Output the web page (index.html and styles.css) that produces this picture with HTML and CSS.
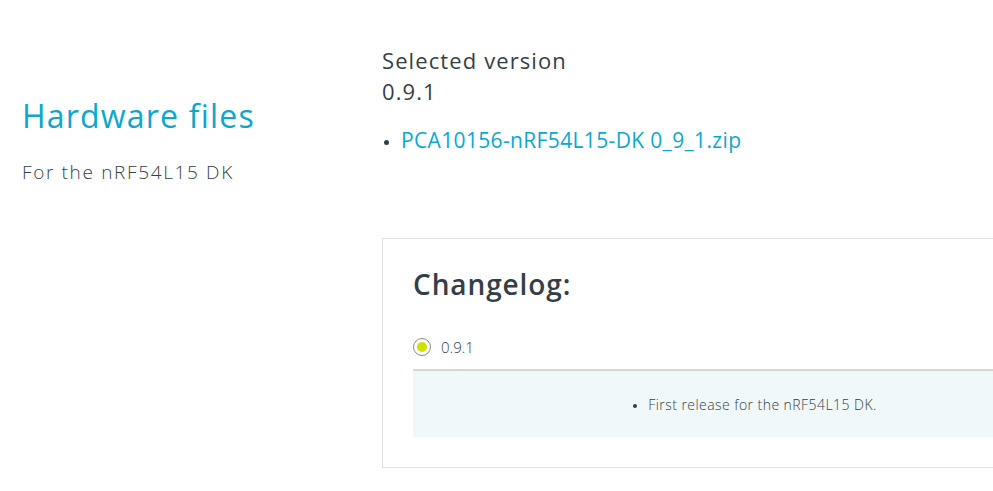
FILE: index.html
```html
<!DOCTYPE html>
<html lang="en">
<head>
<meta charset="utf-8">
<title>Hardware files</title>
<link rel="stylesheet" href="styles.css">
</head>
<body>
<div class="page">
  <div class="intro">
    <h1 class="title">Hardware files</h1>
    <p class="subtitle">For the nRF54L15 DK</p>
  </div>
  <div class="main">
    <div class="version">
      <div class="version-label">Selected version</div>
      <div class="version-number">0.9.1</div>
    </div>
    <ul class="files">
      <li><a class="file-link" href="#">PCA10156-nRF54L15-DK 0_9_1.zip</a></li>
    </ul>
    <section class="card">
      <h2 class="card-title">Changelog:</h2>
      <label class="release">
        <span class="radio"><span class="radio-dot"></span></span>
        <span class="release-name">0.9.1</span>
      </label>
      <div class="notes">
        <ul class="notes-list">
          <li>First release for the nRF54L15 DK.</li>
        </ul>
      </div>
    </section>
  </div>
</div>
</body>
</html>
```
FILE: styles.css
```css
html, body {
  margin: 0;
  padding: 0;
  overflow: hidden;
  background: #ffffff;
}
body {
  font-family: "Open Sans", "Noto Sans", sans-serif;
  color: #333f48;
}
.page {
  display: flex;
  padding: 44px 0 0 22px;
}
.intro {
  width: 360px;
  flex: none;
  padding-top: 52px;
}
.title {
  margin: 0;
  font-size: 32px;
  line-height: 40px;
  font-weight: 400;
  color: #0aa8cf;
  letter-spacing: 1.2px;
}
.subtitle {
  margin: 24px 0 0;
  font-size: 19px;
  line-height: 24px;
  font-weight: 300;
  color: #333f48;
  letter-spacing: 1.65px;
}
.main {
  flex: none;
  width: 760px;
}
.version-label,
.version-number {
  font-size: 22px;
  line-height: 30px;
  font-weight: 400;
  letter-spacing: 1.1px;
}
.version-label {
  margin-top: 1px;
}
.version-number {
  margin-top: 1px;
}
.files {
  margin: 20px 0 0;
  padding: 0 0 0 19px;
  font-size: 21px;
  line-height: 28px;
  letter-spacing: 0.35px;
}
.files li::marker {
  font-size: 14px;
}
.file-link {
  color: #0aa8cf;
  text-decoration: none;
}
.card {
  margin-top: 84px;
  border: 1px solid #e1e1e1;
  border-right: none;
  padding: 25px 0 30px 30px;
}
.card-title {
  margin: 0;
  font-size: 28px;
  line-height: 40px;
  font-weight: 600;
  color: #333f48;
  letter-spacing: 0.9px;
}
.release {
  display: flex;
  align-items: center;
  gap: 10px;
  margin-top: 33px;
  padding-bottom: 12px;
  font-size: 15px;
  font-weight: 300;
}
.radio {
  width: 16px;
  height: 16px;
  border: 1px solid #8a8a8a;
  border-radius: 50%;
  display: flex;
  align-items: center;
  justify-content: center;
}
.radio-dot {
  width: 10px;
  height: 10px;
  border-radius: 50%;
  background: #d0df00;
}
.notes {
  border-top: 2px solid #d6d6d6;
  background: #f1f8fa;
  height: 66px;
  display: flex;
  align-items: center;
  justify-content: center;
  width: 684px;
}
.notes-list {
  margin: 0;
  padding: 0;
  list-style: none;
  font-size: 14px;
  font-weight: 300;
  color: #333f48;
  letter-spacing: 0.45px;
}
.notes-list li::before {
  content: "";
  display: inline-block;
  width: 4px;
  height: 4px;
  border-radius: 50%;
  background: #333f48;
  margin-right: 11px;
  vertical-align: middle;
}
```
